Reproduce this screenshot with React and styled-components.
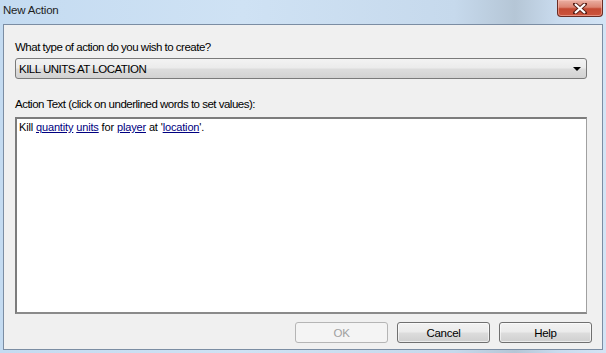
import styled, { createGlobalStyle } from "styled-components";

const GlobalStyle = createGlobalStyle`
  html, body { margin: 0; padding: 0; background: #dbe8f5; }
  body { font-family: "Liberation Sans", Arial, sans-serif; }
`;

const Window = styled.div`
  width: 606px;
  height: 353px;
  display: flex;
  flex-direction: column;
  box-sizing: border-box;
  background: linear-gradient(90deg, #c4dbf1 0%, #cfe2f4 40%, #c6d9ec 75%, #b5c6d6 85%, #c9dbee 92%, #d3e4f5 100%);
`;

const TitleBar = styled.div`
  height: 24px;
  display: flex;
  align-items: flex-start;
  justify-content: space-between;
  padding: 0 3px 0 3px;
  flex-shrink: 0;
`;

const Title = styled.span`
  font-size: 11.5px;
  color: #1e1e1e;
  padding-top: 2px;
  line-height: 16px;
  letter-spacing: -0.2px;
`;

const CloseButton = styled.div`
  width: 46px;
  height: 17px;
  box-sizing: border-box;
  border: 1px solid #6a2c24;
  border-top: none;
  border-radius: 0 0 4px 4px;
  background: linear-gradient(180deg, #eab0a3 0%, #dc8472 45%, #c44a33 55%, #cc553e 100%);
  box-shadow: inset 0 0 0 1px rgba(255, 200, 190, 0.5);
  display: flex;
  align-items: center;
  justify-content: center;
  svg { display: block; }
`;

const Frame = styled.div`
  flex: 1;
  display: flex;
  padding: 0 3px 3px 3px;
  min-height: 0;
`;

const Client = styled.div`
  flex: 1;
  display: flex;
  flex-direction: column;
  background: #f0f0f0;
  border: 1px solid #7b8da3;
  padding: 15px 15px 6px 11px;
  color: #000;
`;

const Label = styled.div`
  font-size: 11.5px;
  line-height: 14px;
  letter-spacing: -0.5px;
  margin-bottom: ${(p) => p.$gap}px;
`;

const Select = styled.div`
  height: 21px;
  box-sizing: border-box;
  border: 1px solid #7a7a7a;
  border-radius: 3px;
  background: linear-gradient(180deg, #f3f3f3 0%, #ebebeb 48%, #dddddd 52%, #d2d2d2 100%);
  display: flex;
  align-items: center;
  justify-content: space-between;
  padding: 0 5px 0 3px;
  font-size: 11.5px;
  letter-spacing: -0.5px;
  margin-bottom: 18px;
`;

const Arrow = styled.span`
  width: 0;
  height: 0;
  border-left: 4px solid transparent;
  border-right: 4px solid transparent;
  border-top: 4px solid #000;
  margin-top: 1px;
`;

const TextBox = styled.div`
  flex: 1;
  background: #fff;
  border-top: 2px solid #7c7c7c;
  border-left: 2px solid #7c7c7c;
  border-right: 1px solid #a0a0a0;
  border-bottom: 2px solid #8a8a8a;
  padding: 2px 2px;
  font-size: 11px;
  line-height: 13px;
  letter-spacing: -0.15px;
`;

const Link = styled.span`
  color: #000080;
  text-decoration: underline;
`;

const ButtonRow = styled.div`
  display: flex;
  justify-content: flex-end;
  gap: 9px;
  margin-top: 8px;
  margin-right: -5px;
`;

const Button = styled.div`
  width: 93px;
  height: 21px;
  box-sizing: border-box;
  border: 1px solid ${(p) => (p.$disabled ? "#b5b5b5" : "#707070")};
  border-radius: 3px;
  background: ${(p) =>
    p.$disabled
      ? "#f4f4f4"
      : "linear-gradient(180deg, #f2f2f2 0%, #ebebeb 48%, #dddddd 52%, #cfcfcf 100%)"};
  box-shadow: inset 0 0 0 1px ${(p) => (p.$disabled ? "#f4f4f4" : "rgba(255,255,255,0.6)")};
  color: ${(p) => (p.$disabled ? "#a0a0a0" : "#000")};
  display: flex;
  align-items: center;
  justify-content: center;
  font-size: 11.5px;
  letter-spacing: -0.3px;
`;

export default function App() {
  return (
    <>
      <GlobalStyle />
      <Window>
        <TitleBar>
          <Title>New Action</Title>
          <CloseButton>
            <svg width="14" height="11" viewBox="0 0 14 11">
              <path d="M2 1 L12 10 M12 1 L2 10" stroke="#5a2018" strokeWidth="4" strokeLinecap="square" />
              <path d="M2 1 L12 10 M12 1 L2 10" stroke="#ffffff" strokeWidth="2.2" />
            </svg>
          </CloseButton>
        </TitleBar>
        <Frame>
          <Client>
            <Label $gap={4}>What type of action do you wish to create?</Label>
            <Select>
              <span>KILL UNITS AT LOCATION</span>
              <Arrow />
            </Select>
            <Label $gap={6}>Action Text (click on underlined words to set values):</Label>
            <TextBox>
              Kill <Link>quantity</Link> <Link>units</Link> for <Link>player</Link> at '<Link>location</Link>'.
            </TextBox>
            <ButtonRow>
              <Button $disabled>OK</Button>
              <Button>Cancel</Button>
              <Button>Help</Button>
            </ButtonRow>
          </Client>
        </Frame>
      </Window>
    </>
  );
}
